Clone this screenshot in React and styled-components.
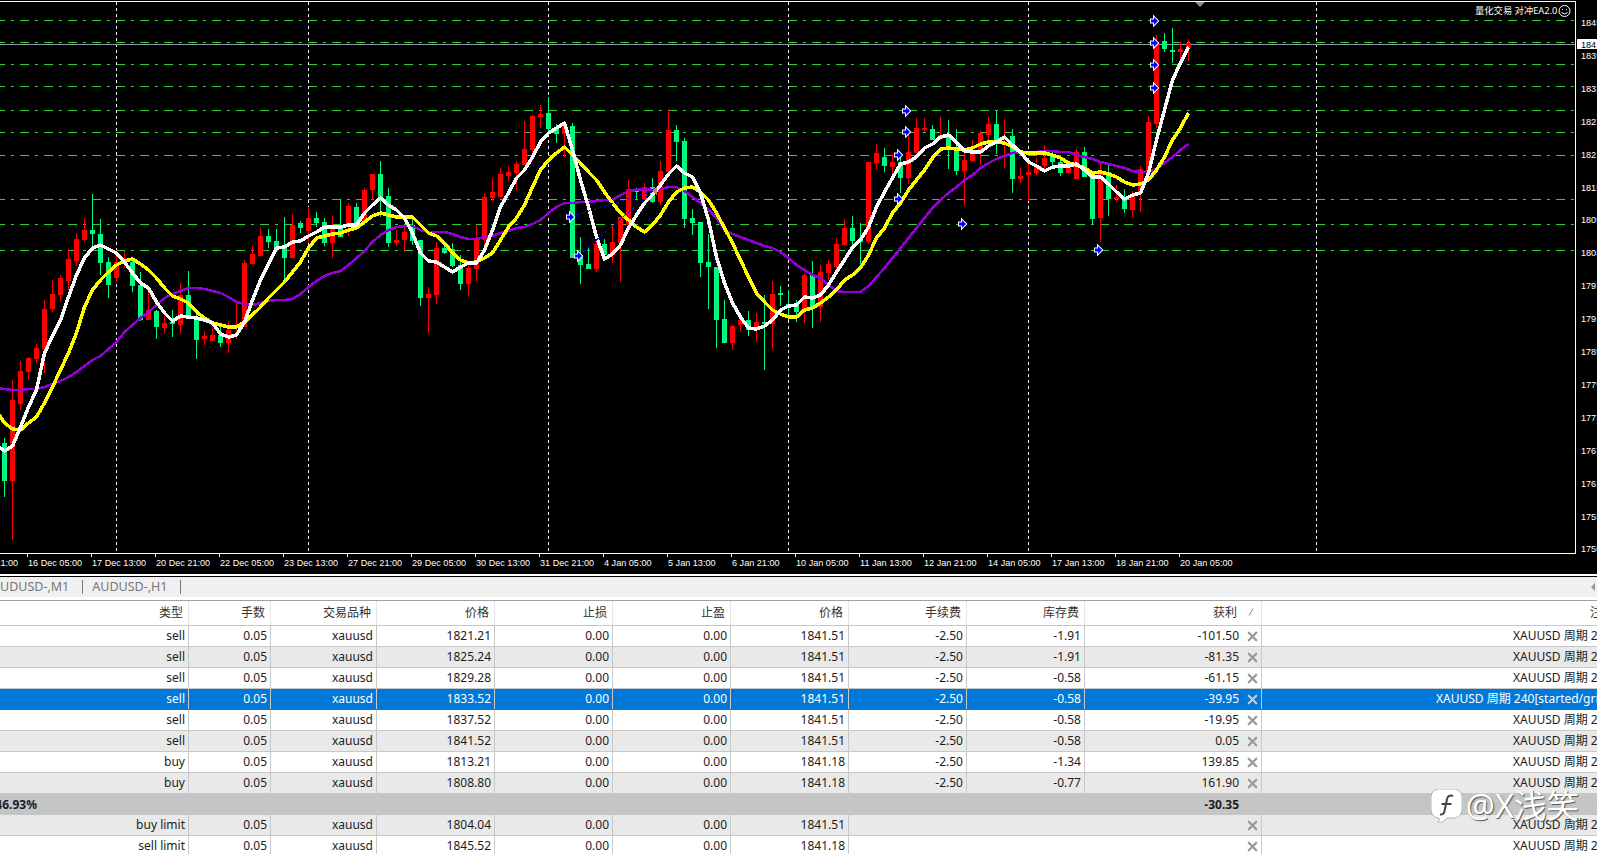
import React from "react";
import styled, { createGlobalStyle } from "styled-components";
import { X } from "lucide-react";

// [high, body top, body bottom, low, isRed] in chart pixels
const candles = [
  [438,443,481,497,0],[380,400,481,540,1],[361,371,404,410,1],[357,358,372,380,1],[344,348,359,363,1],
  [300,309,349,373,1],[280,294,309,312,1],[275,278,295,302,1],[249,259,281,290,1],[233,239,261,266,1],
  [218,230,240,242,1],[194,230,234,248,0],[219,234,263,275,0],[257,262,285,298,0],[250,262,278,282,1],
  [251,258,263,268,1],[258,262,286,292,0],[272,285,320,321,0],[290,310,320,320,1],[310,311,327,339,0],
  [316,323,328,334,1],[310,322,323,337,0],[283,295,325,334,1],[271,295,317,318,0],[313,318,340,359,0],
  [331,336,339,345,1],[327,335,341,341,1],[327,335,343,347,0],[321,330,343,353,1],[303,325,327,339,1],
  [260,263,327,327,1],[246,254,264,265,1],[227,236,256,257,1],[229,236,242,248,0],[229,241,248,249,0],
  [217,248,258,280,0],[214,225,258,258,1],[221,223,228,233,0],[207,218,231,243,1],[212,218,223,227,0],
  [218,222,243,246,0],[216,225,243,258,1],[199,225,237,237,0],[203,206,225,236,1],[203,207,223,230,0],
  [188,190,223,223,1],[174,174,190,200,1],[161,174,198,217,0],[188,196,243,247,0],[230,240,243,246,1],
  [226,232,240,252,1],[217,225,241,245,0],[240,240,298,306,0],[287,294,298,333,1],[242,248,295,304,1],
  [243,248,253,254,0],[243,249,266,267,0],[255,265,284,290,0],[263,268,284,296,1],[225,240,269,281,1],
  [193,197,240,246,1],[178,192,198,201,1],[168,174,197,197,1],[166,172,176,182,1],[161,164,173,190,1],
  [121,149,165,165,1],[115,116,150,161,1],[105,114,117,128,1],[97,113,129,133,0],[124,129,134,143,0],
  [123,125,134,157,1],[123,126,258,258,0],[237,257,265,284,0],[248,264,269,269,0],[238,244,269,272,1],
  [239,244,255,255,0],[225,242,255,263,1],[217,217,243,282,1],[180,189,225,225,1],[188,190,191,199,0],
  [183,187,200,200,1],[178,187,202,203,0],[161,171,202,205,1],[109,130,172,172,1],[125,130,142,161,0],
  [138,141,219,228,0],[209,218,223,235,0],[222,222,263,277,0],[234,262,267,309,0],[267,267,320,348,0],
  [300,319,343,343,0],[325,326,343,350,1],[320,320,325,331,1],[311,320,330,336,0],[313,322,327,342,1],
  [295,322,323,370,0],[281,294,324,349,1],[286,293,295,306,0],[290,304,307,320,0],[300,305,312,322,0],
  [273,275,310,323,1],[261,275,308,328,0],[265,272,307,322,1],[260,264,273,280,1],[238,244,267,270,1],
  [219,228,245,245,1],[216,228,241,247,0],[223,240,242,267,0],[162,162,242,244,1],[144,153,163,169,1],
  [148,157,166,172,0],[154,162,167,175,1],[155,162,178,193,0],[133,152,178,184,1],[118,128,153,153,1],
  [118,128,130,132,1],[125,129,140,140,0],[117,135,139,140,1],[120,135,147,169,0],[129,147,171,175,0],
  [150,160,171,206,1],[140,152,161,162,1],[131,133,152,165,1],[117,124,135,140,1],[110,124,142,154,0],
  [120,137,140,168,1],[129,136,179,193,0],[168,176,179,183,1],[160,172,175,201,1],[158,166,173,175,1],
  [145,158,166,170,1],[152,155,162,165,0],[160,162,173,176,0],[166,167,173,173,1],[149,152,179,179,1],
  [147,152,177,177,0],[177,177,219,224,0],[162,173,218,242,1],[163,172,199,216,0],[185,197,199,202,1],
  [189,199,209,213,0],[191,196,210,217,1],[166,169,193,212,1],[116,122,171,171,1],[35,42,124,128,1],
  [33,41,49,52,0],[28,50,52,63,0],[42,49,52,60,1],[39,43,48,61,1],
];

// moving averages: first value is the point just left of the chart edge
const whiteMa = [
  445,451,446,427,407,390,353,336,320,297,275,258,248,245,249,253,262,273,283,288,302,313,321,316,317,318,
  320,323,334,337,335,322,300,280,264,248,247,242,241,236,232,227,227,227,225,225,213,205,198,205,210,
  218,233,253,261,262,267,272,267,263,263,250,230,207,193,178,170,157,142,133,128,123,150,180,207,237,
  259,254,245,228,215,203,195,185,174,166,173,177,193,220,257,283,303,317,328,329,326,320,310,306,305,
  297,298,295,285,272,260,247,240,227,207,192,178,164,162,157,148,144,137,135,142,151,152,152,146,142,
  137,145,152,162,166,171,167,166,166,164,170,177,177,184,192,199,195,193,173,140,110,80,63,47,
];

const yellowMa = [
  411,423,429,430,423,417,403,387,370,353,333,307,290,280,272,265,261,259,264,270,278,288,296,299,303,312,
  318,323,325,327,327,322,315,307,298,290,282,272,262,248,238,236,234,233,230,228,222,216,213,215,217,
  217,217,225,233,236,243,253,260,263,262,258,253,240,227,218,205,187,170,160,153,147,155,163,172,180,
  192,203,213,220,227,232,225,215,202,192,188,187,192,200,213,228,243,260,277,293,302,310,314,317,317,
  310,308,303,297,290,280,275,268,255,238,228,213,203,190,180,170,158,149,148,149,150,148,144,142,142,
  143,147,152,153,153,153,155,158,163,165,168,173,172,174,177,182,185,184,180,170,157,140,128,113,
];

const purpleMa = [
  388,389,390,390,389,389,387,384,381,377,372,366,360,356,349,342,332,325,318,312,305,298,294,291,288,288,
  289,291,293,297,302,304,305,303,301,300,300,299,294,287,281,276,273,271,265,258,251,242,235,230,227,
  226,226,230,232,232,232,234,237,239,239,237,236,233,231,228,227,224,220,213,207,203,203,202,202,201,
  200,200,195,191,190,189,190,189,187,187,191,197,203,210,218,230,234,237,240,243,246,248,252,258,265,
  270,275,278,285,291,292,292,292,286,277,268,258,248,238,228,218,208,200,193,187,180,175,168,163,159,
  156,153,152,152,152,151,151,152,152,155,157,159,162,164,166,168,171,172,172,169,163,157,150,144,
];

const gridLevels = [20, 42, 64, 86, 110, 132, 155, 199, 224, 250];
const dateLines = [116.5, 308.5, 548.5, 788.5, 1028.5, 1316.5];
const priceTicks = [1845,1839,1833,1827,1821,1815,1809,1803,1797,1791,1785,1779,1773,1767,1761,1755,1750];
const timeTicks = [
  "15 Dec 21:00","16 Dec 05:00","17 Dec 13:00","20 Dec 21:00","22 Dec 05:00","23 Dec 13:00","27 Dec 21:00",
  "29 Dec 05:00","30 Dec 13:00","31 Dec 21:00","4 Jan 05:00","5 Jan 13:00","6 Jan 21:00","10 Jan 05:00",
  "11 Jan 13:00","12 Jan 21:00","14 Jan 05:00","17 Jan 13:00","18 Jan 21:00","20 Jan 05:00",
];
const entryArrows = [
  [1154,21],[1154,43],[1154,65],[1154,88],[906,111],[906,132],[898,155],[898,199],[962,224],[1098,250],[570,217],[578,256],
];

const positions = [
  ["sell","1821.21","1841.51","-2.50","-1.91","-101.50"],
  ["sell","1825.24","1841.51","-2.50","-1.91","-81.35"],
  ["sell","1829.28","1841.51","-2.50","-0.58","-61.15"],
  ["sell","1833.52","1841.51","-2.50","-0.58","-39.95"],
  ["sell","1837.52","1841.51","-2.50","-0.58","-19.95"],
  ["sell","1841.52","1841.51","-2.50","-0.58","0.05"],
  ["buy","1813.21","1841.18","-2.50","-1.34","139.85"],
  ["buy","1808.80","1841.18","-2.50","-0.77","161.90"],
];
const pending = [
  ["buy limit","1804.04","1841.51"],
  ["sell limit","1845.52","1841.18"],
];
const headers = ["类型","手数","交易品种","价格","止损","止盈","价格","手续费","库存费"];

const GlobalStyle = createGlobalStyle`
  html, body {
    margin: 0;
    height: 100%;
    overflow: hidden;
    background: #fff;
  }
`;

const Page = styled.div`
  position: relative;
  display: flex;
  flex-direction: column;
  width: 1597px;
  height: 854px;
  overflow: hidden;
  font-family: "Noto Sans", "Noto Sans CJK SC", sans-serif;
  font-size: 12px;
  color: #1c1c1c;
`;

const ChartSvg = styled.svg`
  display: block;
  flex: none;
  background: #000;
`;

const AxisLabel = styled.text`
  font-family: "Liberation Sans", "Noto Sans CJK SC", sans-serif;
  font-size: 9.1px;
  fill: ${(p) => p.$fill || "#fff"};
`;

const ExpertLabel = styled.text`
  font-family: "Noto Sans", "Noto Sans CJK SC", sans-serif;
  font-size: 9.3px;
  fill: #fff;
`;

const PaneSplit = styled.div`
  flex: none;
  height: 3px;
  background: #fff;
  border-bottom: 1px solid #000;
  box-sizing: border-box;
`;

const TabBar = styled.div`
  flex: none;
  display: flex;
  align-items: center;
  justify-content: space-between;
  height: 20px;
  padding-right: 2px;
  background: #f0f0f0;
  border-bottom: 3px solid #fff;
  box-sizing: content-box;
`;

const TabList = styled.div`
  display: flex;
  margin-left: -17px;
`;

const Tab = styled.div`
  height: 14px;
  line-height: 14px;
  padding: 0 13px 0 9px;
  border-right: 1px solid #777;
  color: #777;
  font-size: 12.5px;
  white-space: nowrap;
`;

const ScrollArrow = styled.span`
  width: 0;
  height: 0;
  border-style: solid;
  border-width: 4px 4px 4px 0;
  border-color: transparent #999 transparent transparent;
`;

const Table = styled.div`
  flex: none;
  width: 1900px;
  border-top: 1px solid #a0a0a0;
`;

const Row = styled.div`
  display: grid;
  grid-template-columns: 189px 82px 106px 118px 118px 118px 118px 118px 118px 177px 640px;
  height: ${(p) => p.$height || 21}px;
  box-sizing: border-box;
  background: ${(p) => (p.$selected ? "#0078d7" : p.$shaded ? "#e9e9e9" : "#fff")};
  color: ${(p) => (p.$selected ? "#fff" : "inherit")};
  border-bottom: 1px solid ${(p) => (p.$selected ? "#0078d7" : "#c8c8c8")};
`;

const HeaderRow = styled(Row)`
  height: 25px;
  color: #333;
  border-bottom: 1px solid #c8c8c8;
`;

const Cell = styled.div`
  display: flex;
  align-items: center;
  justify-content: flex-end;
  padding: 0 3px 2px 0;
  white-space: nowrap;
  box-sizing: border-box;
  border-right: 1px solid ${(p) => (p.$plain ? "transparent" : "#c8c8c8")};
`;

const HeaderCell = styled(Cell)`
  padding-right: 5px;
  border-right-color: #e6e6e6;
`;

const ProfitCell = styled(Cell)`
  gap: 6px;
  padding-right: 1px;
`;

const ProfitHeader = styled(ProfitCell)`
  gap: 11px;
  padding-right: 7px;
  border-right-color: #e6e6e6;
`;

const CloseIcon = styled(X)`
  flex: none;
  width: 15px;
  height: 15px;
  margin-bottom: -2px;
  color: ${(p) => (p.$light ? "#bccbdc" : "#999")};
`;

const NoteCell = styled.div`
  display: flex;
  align-items: center;
  padding: 0 0 2px ${(p) => p.$indent}px;
  white-space: nowrap;
`;

const TotalRow = styled(Row)`
  height: 21px;
  background: #c5c5c5;
  border-bottom: none;
  font-weight: 700;
`;

const TotalCell = styled.div`
  display: flex;
  align-items: center;
  justify-content: flex-end;
  padding-right: ${(p) => p.$pad}px;
  white-space: nowrap;
`;

const Watermark = styled.div`
  position: absolute;
  right: 18px;
  bottom: 31px;
  display: flex;
  align-items: center;
  gap: 4px;
  color: #fff;
  font-size: 32.5px;
  line-height: 34px;
  text-shadow: 1px 1px 1px #555;
  pointer-events: none;
`;

function Candle({ index, data }) {
  const [high, top, bottom, low, red] = data;
  const x = 4 + index * 8;
  const color = red ? "#ff0000" : "#00fa80";
  return (
    <g fill={color}>
      <rect x={x} y={high} width="1" height={low - high} />
      <rect x={x - 2} y={top} width="5" height={Math.max(bottom - top, 2)} />
    </g>
  );
}

function MaLine({ values, color, width }) {
  const points = values.map((y, i) => `${-3.5 + i * 8},${y}`).join(" ");
  return <polyline points={points} fill="none" stroke={color} strokeWidth={width} strokeLinejoin="round" />;
}

function EntryArrow({ x, y }) {
  return (
    <polygon
      transform={`translate(${x} ${y})`}
      points="-3,-1.500 0,-1.500 0,-4 4,0 0,4 0,1.500 -3,1.500"
      fill="#0000ff"
      stroke="#fff"
      strokeWidth="2"
      paintOrder="stroke"
    />
  );
}

function Chart() {
  return (
    <ChartSvg width="1597" height="574" viewBox="0 0 1597 574">
      <g shapeRendering="crispEdges">
        {gridLevels.map((y) => (
          <line key={y} x1="0" x2="1575" y1={y + 0.5} y2={y + 0.5} stroke="#32cd32" strokeDasharray="9 6 3 6" strokeDashoffset="4" />
        ))}
        {dateLines.map((x) => (
          <line key={x} x1={x} x2={x} y1="2" y2="553" stroke="#fff" strokeDasharray="3 3" />
        ))}
        <line x1="0" x2="1575" y1="44.5" y2="44.5" stroke="#8f9cab" />
        {candles.map((c, i) => (
          <Candle key={i} index={i} data={c} />
        ))}
        <MaLine values={purpleMa} color="#9400d3" width={2.6} />
        <MaLine values={yellowMa} color="#ffff00" width={3.5} />
        <MaLine values={whiteMa} color="#ffffff" width={3.5} />
        <line x1="570" y1="217" x2="653" y2="191" stroke="#0000ff" strokeDasharray="3 3" />
        <line x1="578" y1="256" x2="653" y2="191" stroke="#0000ff" strokeDasharray="3 3" />
        <polygon points="652,191 657,187 657,195" fill="#c8924e" />
        <line x1="0" x2="1576" y1="1.5" y2="1.5" stroke="#fff" />
        <line x1="1575.5" x2="1575.5" y1="1" y2="553" stroke="#fff" />
        <line x1="0" x2="1576" y1="553.5" y2="553.5" stroke="#fff" />
        {timeTicks.map((_, i) => (
          <line key={i} x1={-36.5 + 64 * i} x2={-36.5 + 64 * i} y1="553" y2="557" stroke="#fff" />
        ))}
      </g>
      {entryArrows.map(([x, y]) => (
        <EntryArrow key={`${x}-${y}`} x={x} y={y} />
      ))}
      <polygon points="1195,2 1205,2 1200,7" fill="#8a8f96" />

      <ExpertLabel x="1475" y="14">量化交易 对冲EA2.0</ExpertLabel>
      <g fill="none" stroke="#fff">
        <circle cx="1564.5" cy="11" r="5.5" />
        <path d="M1561.5 12.500q3 3 6 0" />
        <path d="M1562.5 9v1M1566.5 9v1" />
      </g>

      {priceTicks.map((price, i) => (
        <AxisLabel key={price} x="1581" y={26 + i * 32.9}>{price}</AxisLabel>
      ))}
      <rect x="1577" y="39" width="20" height="10" fill="#fff" />
      <AxisLabel x="1581" y="47.5" $fill="#000">1841.51</AxisLabel>

      {timeTicks.map((label, i) => (
        <AxisLabel key={label} x={-36 + 64 * i} y="565.5">{label}</AxisLabel>
      ))}
    </ChartSvg>
  );
}

export default function App() {
  return (
    <Page>
      <GlobalStyle />
      <Chart />
      <PaneSplit />
      <TabBar>
        <TabList>
          <Tab>AUDUSD-,M1</Tab>
          <Tab>AUDUSD-,H1</Tab>
        </TabList>
        <ScrollArrow />
      </TabBar>

      <Table>
        <HeaderRow>
          {headers.map((h, i) => (
            <HeaderCell key={i}>{h}</HeaderCell>
          ))}
          <ProfitHeader>
            获利
            <svg width="6" height="8" viewBox="0 0 6 8">
              <path d="M1 7.500 5 .5" stroke="#888" fill="none" />
            </svg>
          </ProfitHeader>
          <NoteCell $indent={328}>注释</NoteCell>
        </HeaderRow>

        {positions.map((p, i) => (
          <Row key={i} $shaded={i % 2 === 1} $selected={i === 3}>
            <Cell>{p[0]}</Cell>
            <Cell>0.05</Cell>
            <Cell>xauusd</Cell>
            <Cell>{p[1]}</Cell>
            <Cell>0.00</Cell>
            <Cell>0.00</Cell>
            <Cell>{p[2]}</Cell>
            <Cell>{p[3]}</Cell>
            <Cell>{p[4]}</Cell>
            <ProfitCell>
              {p[5]}
              <CloseIcon strokeWidth={3.6} $light={i === 3} />
            </ProfitCell>
            <NoteCell $indent={i === 3 ? 174 : 251}>XAUUSD 周期 240[started/grid]</NoteCell>
          </Row>
        ))}

        <TotalRow>
          <TotalCell $pad={152}>46.93%</TotalCell>
          <span />
          <span />
          <span />
          <span />
          <span />
          <span />
          <span />
          <span />
          <TotalCell $pad={23}>-30.35</TotalCell>
        </TotalRow>

        {pending.map((p, i) => (
          <Row key={i} $shaded={i === 0}>
            <Cell>{p[0]}</Cell>
            <Cell>0.05</Cell>
            <Cell>xauusd</Cell>
            <Cell>{p[1]}</Cell>
            <Cell>0.00</Cell>
            <Cell>0.00</Cell>
            <Cell>{p[2]}</Cell>
            <Cell $plain />
            <Cell $plain />
            <ProfitCell>
              <CloseIcon strokeWidth={3.6} />
            </ProfitCell>
            <NoteCell $indent={251}>XAUUSD 周期 240[started/grid]</NoteCell>
          </Row>
        ))}
      </Table>

      <Watermark>
        <svg width="31" height="34" viewBox="0 0 31 34">
          <path d="M8 0h15a8 8 0 0 1 8 8v13a8 8 0 0 1-8 8h-7c-2 3-6 5-9 5 1-2 2-4 1-5a8 8 0 0 1-8-8V8a8 8 0 0 1 8-8z" fill="#fff" stroke="#777" strokeWidth="0.5" />
          <path d="M22 7c-3-1-5.500 0-6 3l-2.500 12c-.5 3-2 4-4.500 3.500M10.500 15h10" fill="none" stroke="#444" strokeWidth="2" />
        </svg>
        @X浅笑
      </Watermark>
    </Page>
  );
}
